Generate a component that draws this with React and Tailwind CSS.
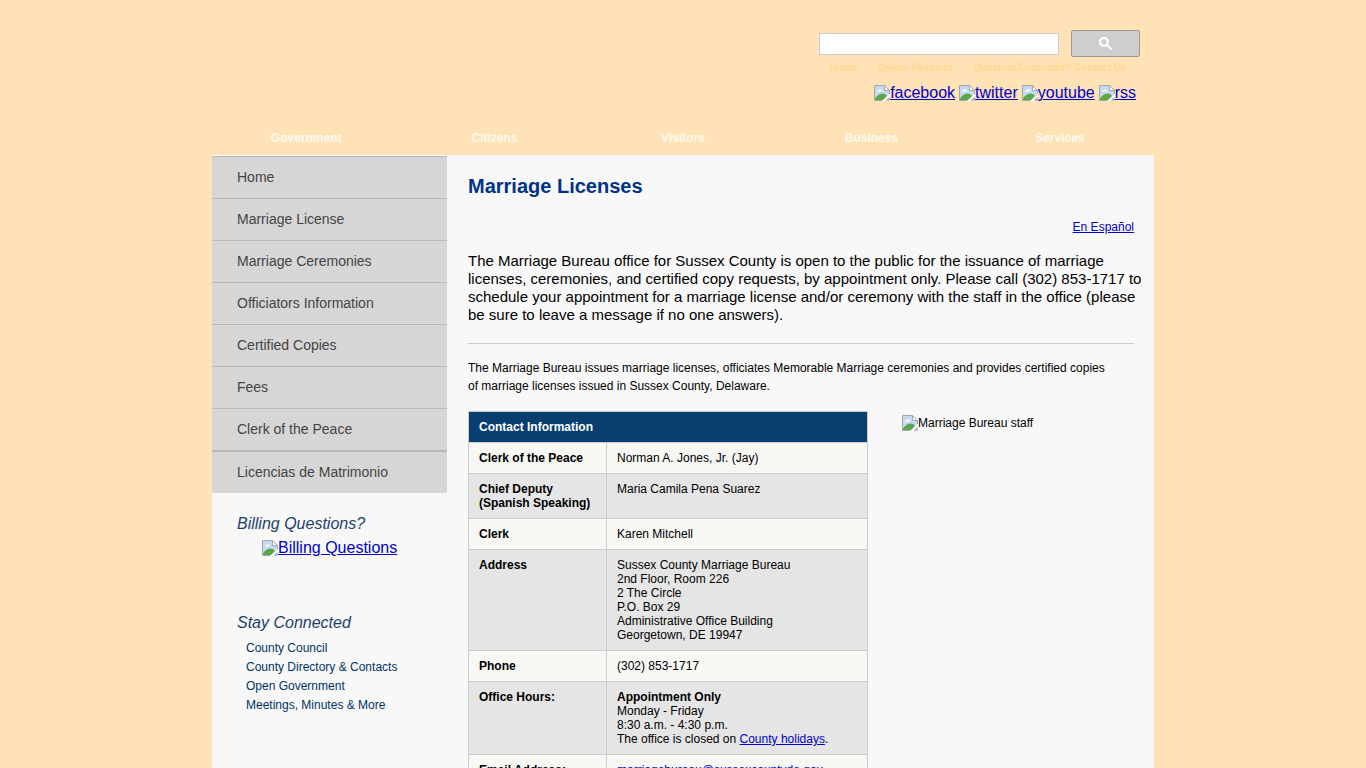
import React from "react";

const topLinks = ["Home", "Online Payment", "Question/Comment? Contact Us"];
const socials = ["facebook", "twitter", "youtube", "rss"];
const mainNav = ["Government", "Citizens", "Visitors", "Business", "Services"];

const sideLinks = [
  "Home",
  "Marriage License",
  "Marriage Ceremonies",
  "Officiators Information",
  "Certified Copies",
  "Fees",
  "Clerk of the Peace",
];

const connectLinks = [
  "County Council",
  "County Directory & Contacts",
  "Open Government",
  "Meetings, Minutes & More",
];

const contactRows = [
  { label: "Clerk of the Peace", value: "Norman A. Jones, Jr. (Jay)" },
  {
    label: (
      <>
        Chief Deputy
        <br />
        (Spanish Speaking)
      </>
    ),
    value: "Maria Camila Pena Suarez",
  },
  { label: "Clerk", value: "Karen Mitchell" },
  {
    label: "Address",
    value: (
      <>
        Sussex County Marriage Bureau
        <br />
        2nd Floor, Room 226
        <br />
        2 The Circle
        <br />
        P.O. Box 29
        <br />
        Administrative Office Building
        <br />
        Georgetown, DE 19947
      </>
    ),
  },
  { label: "Phone", value: "(302) 853-1717" },
  {
    label: "Office Hours:",
    value: (
      <>
        <strong>Appointment Only</strong>
        <br />
        Monday - Friday
        <br />
        8:30 a.m. - 4:30 p.m.
        <br />
        The office is closed on{" "}
        <a href="#holidays" className="text-[#0000cc] underline">
          County holidays
        </a>
        .
      </>
    ),
  },
  {
    label: "Email Address:",
    value: (
      <a href="#email" className="text-[#0000cc] underline">
        marriagebureau@sussexcountyde.gov
      </a>
    ),
  },
];

// Small picture placeholder, shown before the alternative text
const PictureIcon = () => (
  <svg width="16" height="16" viewBox="0 0 16 16" className="inline-block shrink-0 align-[-3px]" aria-hidden="true">
    <path d="M0.5 0.5H11L15.5 5V15.5H0.5Z" fill="#c6d8f2" />
    <path d="M3 6.5C3 5.5 4 5 4.7 5C5.2 4 7 4 7.3 5.200C8.3 5.2 8.5 6.5 7.5 6.5Z" fill="#fff" />
    <path d="M1 15V13.5C3.500 10 6 8.500 8.500 8.500C10.500 8.500 12 9.500 13 11L9 15Z" fill="#5aa847" />
    <path d="M10.500 0.500V5.500H15.500Z" fill="#fff" />
    <path d="M8.500 16L16 8.500V11.500L11.500 16Z" fill="#fff" />
    <path d="M8 15.500H0.500V0.500H10.500L15.500 5.500V9M10.500 0.500V5.500H15.500" fill="none" stroke="#a6a6a6" />
    <path d="M15.500 12V15.500H12Z" fill="#a6a6a6" />
  </svg>
);

const Header = () => (
  <header>
    <div className="flex flex-col items-end pt-[30px] pr-3.5">
      <form className="flex items-center gap-3" onSubmit={(e) => e.preventDefault()}>
        <input
          type="text"
          aria-label="Search"
          className="w-60 h-[22px] px-1 text-sm bg-white border border-[#cccccc]"
        />
        <button
          type="submit"
          aria-label="Search"
          className="flex items-center justify-center w-[69px] h-[27px] bg-[#cecece] border border-[#999999] rounded-xs"
        >
          <svg width="13" height="13" viewBox="0 0 13 13" fill="#fff" stroke="#fff" strokeWidth="0.4" aria-hidden="true">
            <path d="m4.8495 7.8226c0.82666 0 1.5262-0.29146 2.0985-0.87438 0.57232-0.58292 0.86378-1.2877 0.87438-2.1144 0.010599-0.82666-0.28086-1.5262-0.87438-2.0985-0.59352-0.57232-1.293-0.86378-2.0985-0.87438-0.8055-0.010599-1.5103 0.28086-2.1144 0.87438-0.60414 0.59352-0.8956 1.293-0.87438 2.0985 0.021197 0.8055 0.31266 1.5103 0.87438 2.1144 0.56172 0.60414 1.2665 0.8956 2.1144 0.87438zm4.4695 0.2115 3.681 3.6819-1.259 1.284-3.6817-3.7 0.0019784-0.69479-0.090043-0.098846c-0.87973 0.76087-1.92 1.1413-3.1207 1.1413-1.3553 0-2.5025-0.46363-3.4417-1.3909s-1.4088-2.0686-1.4088-3.4239c0-1.3553 0.4696-2.4966 1.4088-3.4239 0.9392-0.92727 2.0864-1.3969 3.4417-1.4088 1.3553-0.011889 2.4906 0.45771 3.406 1.4088 0.9154 0.95107 1.379 2.0924 1.3909 3.4239 0 1.2126-0.38043 2.2588-1.1413 3.1385l0.098834 0.090049z" />
          </svg>
        </button>
      </form>
      <ul className="flex gap-5 mt-[3px] pr-[13px] text-[10px] leading-4 font-bold text-[#ffd991]">
        {topLinks.map((item) => (
          <li key={item}>
            <a href="#top">{item}</a>
          </li>
        ))}
      </ul>
      <div className="flex gap-1 mt-[7px] pr-1 text-base leading-5 text-[#0000cc]">
        {socials.map((item) => (
          <a key={item} href="#social" className="underline">
            <PictureIcon />
            {item}
          </a>
        ))}
      </div>
    </div>

    <nav className="flex mt-[25px] pb-[7px] text-xs leading-5 font-bold text-[#fffaf2]">
      {mainNav.map((item) => (
        <a key={item} href="#section" className="flex-1 text-center">
          {item}
        </a>
      ))}
    </nav>
  </header>
);

const Sidebar = () => (
  <aside className="w-[235px] shrink-0 pt-px">
    <nav className="bg-[#d6d6d6] text-sm text-[#444444]">
      <ul className="border-b border-[#b8b8b8]">
        {sideLinks.map((item) => (
          <li key={item} className="border-t border-[#b8b8b8]">
            <a href="#page" className="block h-[41px] pl-[25px] leading-[41px]">
              {item}
            </a>
          </li>
        ))}
      </ul>
      <ul>
        <li className="border-t border-[#b8b8b8]">
          <a href="#es" className="block h-[41px] pl-[25px] leading-[41px]">
            Licencias de Matrimonio
          </a>
        </li>
      </ul>
    </nav>

    <section className="mt-[21px] px-[25px]">
      <h2 className="text-base leading-5 italic text-[#1c3f6e]">Billing Questions?</h2>
      <a href="#billing" className="block mt-1 pl-[25px] text-base leading-5 text-[#0000cc] underline">
        <PictureIcon />
        Billing Questions
      </a>
    </section>

    <section className="mt-[55px] px-[25px]">
      <h2 className="text-base leading-5 italic text-[#1c3f6e]">Stay Connected</h2>
      <ul className="mt-1.5 pl-[9px] text-xs leading-[19px] text-[#003366]">
        {connectLinks.map((item) => (
          <li key={item}>
            <a href="#connect">{item}</a>
          </li>
        ))}
      </ul>
    </section>
  </aside>
);

const ContactTable = () => (
  <table className="w-[400px] shrink-0 border-collapse text-xs leading-[14px] text-left">
    <thead>
      <tr className="bg-[#083f70] text-white">
        <th colSpan={2} className="border border-[#cccccc] px-2.5 py-2">
          Contact Information
        </th>
      </tr>
    </thead>
    <tbody>
      {contactRows.map((row, i) => (
        <tr key={i} className="align-top bg-[#f7f7f4] even:bg-[#e5e5e5]">
          <th scope="row" className="w-[138px] border border-[#cccccc] px-2.5 py-2">
            {row.label}
          </th>
          <td className="border border-[#cccccc] px-2.5 py-2">{row.value}</td>
        </tr>
      ))}
    </tbody>
  </table>
);

const Content = () => (
  <main className="flex-1 pl-[21px] pr-5 pt-[19px] text-black">
    <h1 className="text-xl leading-6 font-bold text-[#003388]">Marriage Licenses</h1>
    <p className="mt-5 text-right text-xs leading-[18px]">
      <a href="#es" className="text-[#0000cc] underline">
        En Español
      </a>
    </p>
    <p className="mt-4 -mr-3 text-[15px] leading-[18px]">
      The Marriage Bureau office for Sussex County is open to the public for the issuance of marriage licenses,
      ceremonies, and certified copy requests, by appointment only. Please call (302) 853-1717 to schedule your
      appointment for a marriage license and/or ceremony with the staff in the office (please be sure to leave a
      message if no one answers).
    </p>
    <hr className="mt-[19px] border-[#cccccc]" />
    <p className="mt-[15px] pr-5 text-xs leading-[18px]">
      The Marriage Bureau issues marriage licenses, officiates Memorable Marriage ceremonies and provides certified
      copies of marriage licenses issued in Sussex County, Delaware.
    </p>
    <div className="flex gap-[34px] mt-4">
      <ContactTable />
      <div className="flex pt-1 text-xs leading-4 h-5">
        <PictureIcon />
        Marriage Bureau staff
      </div>
    </div>
  </main>
);

const App = () => {
  return (
    <div className="flex flex-col min-h-screen bg-[#ffe2b5] font-['Liberation_Sans',Arial,sans-serif]">
      <div className="flex flex-col flex-1 w-full max-w-[942px] mx-auto">
        <Header />
        <div className="flex flex-1 bg-[#f8f8f8]">
          <Sidebar />
          <Content />
        </div>
      </div>
    </div>
  );
};

export default App;
